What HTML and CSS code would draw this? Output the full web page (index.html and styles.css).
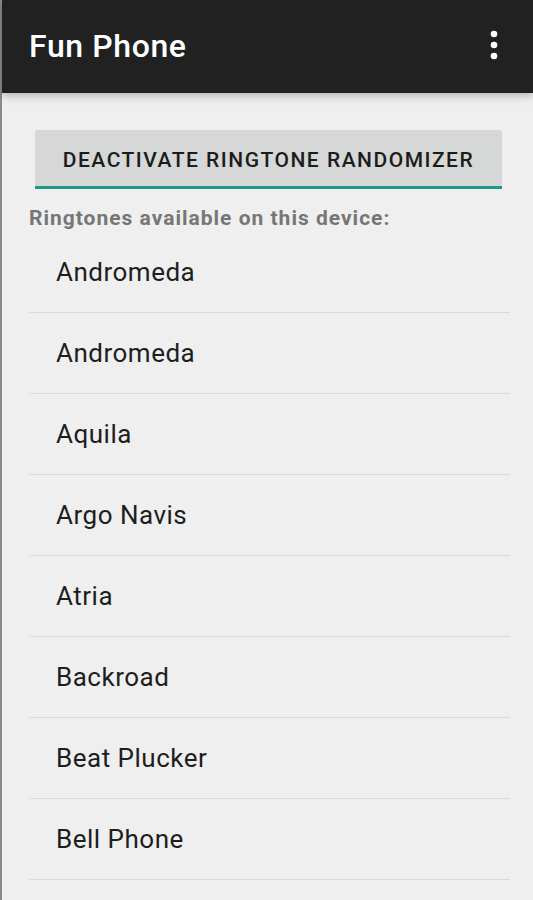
FILE: index.html
```html
<!DOCTYPE html>
<html>
<head>
<title>Fun Phone</title>
<link rel="stylesheet" href="styles.css">
</head>
<body>

<div class="screen">
  <div class="toolbar">
    <span class="title">Fun Phone</span>
    <svg class="menu" width="8" height="30" viewBox="0 0 8 30">
      <circle cx="4" cy="4" r="3.3" fill="#fff"/>
      <circle cx="4" cy="15" r="3.3" fill="#fff"/>
      <circle cx="4" cy="26" r="3.3" fill="#fff"/>
    </svg>
  </div>

  <div class="content">
    <button type="button" class="toggle">Deactivate Ringtone Randomizer</button>
    <div class="label">Ringtones available on this device:</div>
    <ul class="ringtones">
      <li>Andromeda</li>
      <li>Andromeda</li>
      <li>Aquila</li>
      <li>Argo Navis</li>
      <li>Atria</li>
      <li>Backroad</li>
      <li>Beat Plucker</li>
      <li>Bell Phone</li>
    </ul>
  </div>
</div>

</body>
</html>
```

FILE: styles.css
```css
body {
  font-family: Roboto, "Noto Sans", sans-serif;
  margin: 0;
  padding: 0;
  background-color: #efefef;
  overflow: hidden;
}

.screen {
  height: 900px;
  border-left: 2px solid #8a8a8a;
  background-color: #efefef;
}

.toolbar {
  height: 93px;
  background-color: #212121;
  display: flex;
  align-items: center;
  justify-content: space-between;
  padding: 0 35px 0 27px;
  box-shadow: 0 3px 8px rgba(0, 0, 0, 0.25);
  position: relative;
}

.title {
  color: #fff;
  font-size: 32px;
  font-weight: 500;
  letter-spacing: 0.6px;
  margin-top: -2px;
}

.menu {
  margin-top: -4px;
}

.content {
  padding: 37px 23px 0 27px;
}

.toggle {
  display: block;
  width: 467px;
  height: 59px;
  margin-left: 6px;
  padding: 3px 0 0;
  background-color: #d6d7d7;
  border: none;
  border-bottom: 3px solid #1d9a8b;
  border-radius: 3px 3px 0 0;
  font-family: Roboto, sans-serif;
  font-size: 21px;
  font-weight: 500;
  letter-spacing: 1.5px;
  color: #1c1c1c;
  text-transform: uppercase;
}

.label {
  margin-top: 17px;
  color: #767676;
  font-size: 21px;
  font-weight: bold;
  letter-spacing: 1px;
}

.ringtones {
  list-style: none;
  margin: 2px 0 0;
  padding: 0;
}

.ringtones li {
  height: 80px;
  line-height: 80px;
  padding-left: 27px;
  border-bottom: 1px solid #dadada;
  font-size: 26px;
  letter-spacing: 0.5px;
  color: #1e1e1e;
}
```
